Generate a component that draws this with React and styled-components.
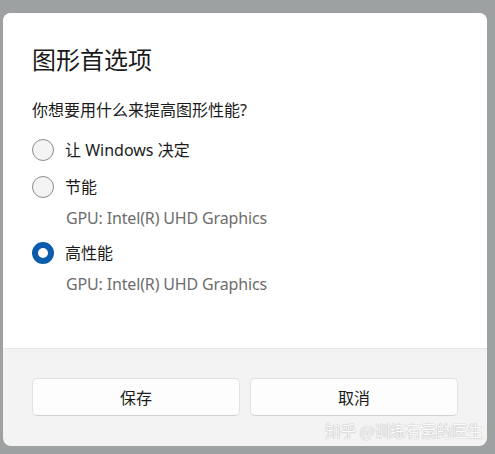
import React from "react"
import styled, { createGlobalStyle } from "styled-components"

const GlobalStyle = createGlobalStyle`
  html, body {
    margin: 0;
    padding: 0;
    background: #9ea1a1;
  }
  body {
    font-family: "Noto Sans", "Noto Sans CJK SC", sans-serif;
    color: #1b1b1b;
  }
`

const options = [
  { id: "auto", label: "让 Windows 决定" },
  { id: "save", label: "节能", gpu: "GPU: Intel(R) UHD Graphics" },
  { id: "high", label: "高性能", gpu: "GPU: Intel(R) UHD Graphics" }
]

export default function App() {
  const [choice, setChoice] = React.useState("high")

  return (
    <Page>
      <GlobalStyle />
      <Dialog>
        <Content>
          <Title>图形首选项</Title>
          <Question>你想要用什么来提高图形性能?</Question>
          <Options>
            {options.map((opt) => (
              <Option key={opt.id} onClick={() => setChoice(opt.id)}>
                <Row>
                  <Radio $checked={choice === opt.id} />
                  <Label>{opt.label}</Label>
                </Row>
                {opt.gpu && <Sub>{opt.gpu}</Sub>}
              </Option>
            ))}
          </Options>
        </Content>
        <Footer>
          <Button>保存</Button>
          <Button>取消</Button>
        </Footer>
        <Watermark>知乎 @训练有素的医生</Watermark>
      </Dialog>
    </Page>
  )
}

const Page = styled.div`
  padding: 13px 8px 8px 3px;
`

const Dialog = styled.div`
  position: relative;
  width: 484px;
  height: 433px;
  border-radius: 8px;
  overflow: hidden;
  background: #f3f3f3;
  display: flex;
  flex-direction: column;
`

const Content = styled.div`
  height: 336px;
  box-sizing: border-box;
  background: #ffffff;
  border-bottom: 1px solid #e5e5e5;
  padding: 31px 29px 0;
`

const Title = styled.h1`
  margin: 0;
  font-size: 24px;
  line-height: 32px;
  font-weight: 400;
  color: #1a1a1a;
`

const Question = styled.p`
  margin: 22px 0 0;
  font-size: 16px;
  line-height: 24px;
`

const Options = styled.div`
  margin-top: 14px;
  display: flex;
  flex-direction: column;
  gap: 9px;
`

const Option = styled.div`
  cursor: default;
`

const Row = styled.div`
  display: flex;
  align-items: center;
  gap: 11px;
  height: 28px;
`

const Radio = styled.span`
  box-sizing: border-box;
  width: 22px;
  height: 22px;
  border-radius: 50%;
  flex-shrink: 0;
  border: ${(p) => (p.$checked ? "6px solid #0b5cad" : "1.5px solid #8c8c8c")};
  background: ${(p) => (p.$checked ? "#ffffff" : "#f4f4f4")};
`

const Label = styled.span`
  font-size: 16px;
  line-height: 24px;
`

const Sub = styled.div`
  margin-top: 5px;
  padding-left: 34px;
  font-size: 16px;
  line-height: 24px;
  letter-spacing: -0.15px;
  color: #6d6d6d;
`

const Footer = styled.div`
  display: flex;
  gap: 10px;
  padding: 29px 29px 0;
`

const Button = styled.button`
  flex: 1;
  height: 38px;
  border: 1px solid #e1e1e1;
  border-bottom-color: #d2d2d2;
  border-radius: 5px;
  background: #fdfdfd;
  font-family: "Noto Sans", "Noto Sans CJK SC", sans-serif;
  font-size: 16px;
  color: #1b1b1b;
`

const Watermark = styled.div`
  position: absolute;
  right: 4px;
  bottom: 4px;
  font-family: "Noto Sans CJK SC", sans-serif;
  font-size: 15.5px;
  line-height: 24px;
  color: #fbfbfb;
  text-shadow: 0 0 1px #b4b4b4, 0 0 1px #b4b4b4;
`
